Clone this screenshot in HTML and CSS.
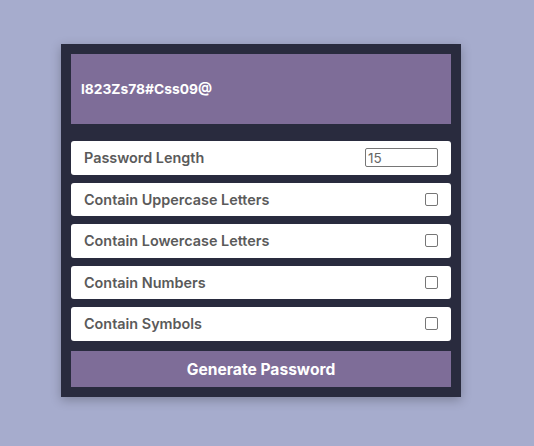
FILE: index.html
```html
<!DOCTYPE html>
<html>
<head>
<meta charset="utf-8">
<link rel="stylesheet" href="styles.css">
</head>
<body>
<div class="page">
  <div class="card">
    <div class="result"><span class="result-text">l823Zs78#Css09@</span></div>
    <div class="settings">
      <label class="setting">
        <span class="label">Password Length</span>
        <input class="num" type="number" value="15">
      </label>
      <label class="setting">
        <span class="label">Contain Uppercase Letters</span>
        <span class="check"></span>
      </label>
      <label class="setting">
        <span class="label">Contain Lowercase Letters</span>
        <span class="check"></span>
      </label>
      <label class="setting">
        <span class="label">Contain Numbers</span>
        <span class="check"></span>
      </label>
      <label class="setting">
        <span class="label">Contain Symbols</span>
        <span class="check"></span>
      </label>
    </div>
    <button class="generate">Generate Password</button>
  </div>
</div>
</body>
</html>
```

FILE: styles.css
```css
* { box-sizing: border-box; }
html, body { margin: 0; padding: 0; }
body {
  background: #a6accd;
  font-family: Inter, "Noto Sans", sans-serif;
  width: 534px;
  height: 446px;
  overflow: hidden;
}
.page {
  padding-top: 44px;
  padding-left: 61px;
}
.card {
  width: 400px;
  background: #292b3e;
  padding: 10px;
  box-shadow: 0 3px 10px rgba(0, 0, 0, 0.25);
}
.result {
  height: 70px;
  background: #7e6d98;
  display: flex;
  align-items: center;
  padding-left: 10px;
}
.result-text {
  color: #fff;
  font-weight: 700;
  font-size: 13.8px;
}
.settings {
  margin-top: 17px;
  display: flex;
  flex-direction: column;
  gap: 8px;
}
.setting {
  height: 33.5px;
  background: #fff;
  border-radius: 3px;
  display: flex;
  align-items: center;
  justify-content: space-between;
  padding: 0 13px 0 13px;
}
.label {
  color: #5a5a5a;
  font-size: 14.4px;
  font-weight: 600;
}
.num {
  width: 73px;
  height: 19px;
  border: 1px solid #767676;
  border-radius: 2px;
  padding: 0 2px;
  font-family: Inter, sans-serif;
  font-size: 13.5px;
  color: #666;
  -moz-appearance: textfield;
}
.num::-webkit-inner-spin-button,
.num::-webkit-outer-spin-button { -webkit-appearance: none; margin: 0; }
.check {
  width: 13px;
  height: 13px;
  border: 1px solid #767676;
  border-radius: 2px;
  background: #fff;
}
.generate {
  margin-top: 10px;
  width: 100%;
  height: 36px;
  padding: 2px 0 0;
  border: none;
  background: #7e6d98;
  color: #fff;
  font-family: Inter, sans-serif;
  font-weight: 700;
  font-size: 15.6px;
  display: block;
}
```
